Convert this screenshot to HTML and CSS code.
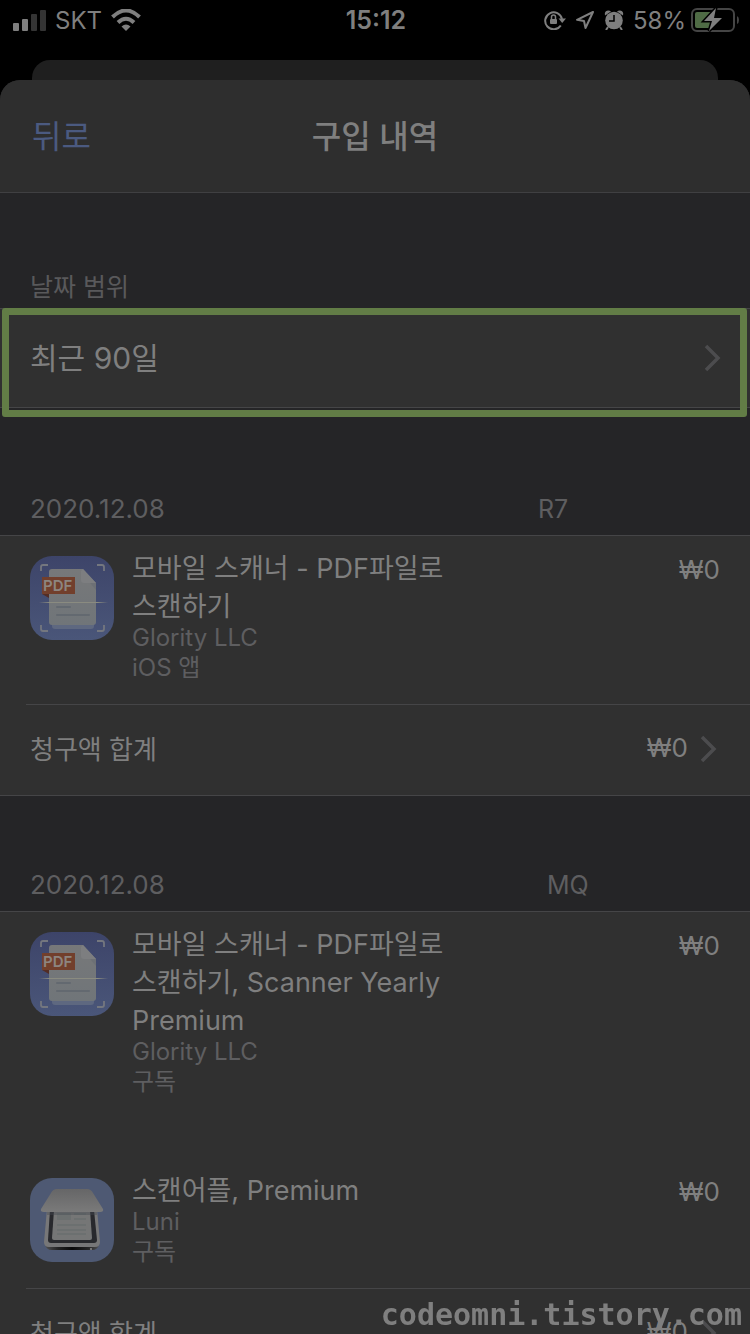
FILE: index.html
```html
<!DOCTYPE html>
<html lang="ko">
  <head>
    <meta charset="utf-8">
    <meta name="viewport" content="width=device-width, initial-scale=1">
    <title>구입 내역</title>
    <link rel="stylesheet" href="styles.css">
  </head>
  <body>
    <!-- shared icons -->
    <svg class="defs" width="0" height="0" aria-hidden="true">
      <defs>
        <linearGradient id="pdf-bg" x1="0" y1="0" x2="0" y2="1">
          <stop offset="0" stop-color="#3d4469"/>
          <stop offset="1" stop-color="#4a5679"/>
        </linearGradient>
        <linearGradient id="paper" x1="0" y1="0" x2="0" y2="1">
          <stop offset="0" stop-color="#777879"/>
          <stop offset="1" stop-color="#707579"/>
        </linearGradient>
        <linearGradient id="beam" x1="0" y1="0" x2="1" y2="0">
          <stop offset="0" stop-color="#8a8b80" stop-opacity="0"/>
          <stop offset=".15" stop-color="#8a8b80"/>
          <stop offset=".85" stop-color="#8a8b80"/>
          <stop offset="1" stop-color="#8a8b80" stop-opacity="0"/>
        </linearGradient>
        <linearGradient id="lid" x1="0" y1="0" x2="0" y2="1">
          <stop offset="0" stop-color="#666667"/>
          <stop offset="1" stop-color="#7a7a7a"/>
        </linearGradient>
        <linearGradient id="base" x1="0" y1="0" x2="1" y2="0">
          <stop offset="0" stop-color="#505051"/>
          <stop offset=".25" stop-color="#222223"/>
          <stop offset=".5" stop-color="#09090a"/>
          <stop offset=".8" stop-color="#252526"/>
          <stop offset="1" stop-color="#505051"/>
        </linearGradient>
      </defs>
      <symbol id="chevron" viewBox="0 0 18 28">
        <path d="M2 2l12 12L2 26" fill="none" stroke="currentColor" stroke-width="3.500"/>
      </symbol>
      <symbol id="app-pdf" viewBox="0 0 84 84">
        <rect width="84" height="84" rx="22" fill="url(#pdf-bg)"/>
        <path d="M11 15v-4q0-2 2-2h5M67 9h5q2 0 2 2v4M11 69v4q0 2 2 2h5M67 75h5q2 0 2-2v-4" fill="none" stroke="#74777f" stroke-width="1.800"/>
        <path d="M22 68h42v2q0 3-3 3H25q-3 0-3-3z" fill="#5e6880"/>
        <path d="M22 13h31l13 14v39q0 3-3 3H22q-3 0-3-3V16q0-3 3-3z" fill="url(#paper)"/>
        <path d="M51 16l15 11v7z" fill="#686c73" opacity=".6"/>
        <path d="M53 13l13 14H54q-3 0-3-3V15z" fill="#7d7e80"/>
        <path d="M27 51h13M27 59h32" stroke="#636970" stroke-width="2" stroke-linecap="round"/>
        <path d="M12 38h7v4z" fill="#532d25"/>
        <path d="M12 21h33v17H12z" fill="#723f2c"/>
        <text class="pdf-text" x="13" y="35">PDF</text>
        <rect x="9" y="46" width="69" height="1" fill="url(#beam)"/>
      </symbol>
      <symbol id="app-scanner" viewBox="0 0 84 84">
        <rect width="84" height="84" rx="22" fill="#4e5973"/>
        <path d="M15 66h54q-1 6-7 6H22q-6 0-7-6z" fill="url(#base)"/>
        <path d="M17 31h50l3 33q0 5-5 5H19q-5 0-5-5z" fill="#777778"/>
        <path d="M20 32h44l3 30q0 3-3 3H21q-3 0-3-3z" fill="#28292d"/>
        <path d="M24 32h36l2 28q0 2-2 2H24q-2 0-2-2z" fill="#757676"/>
        <path d="M27 35h14v7H27zM44 35h12v2H44zM44 40h12v2H44zM27 46h29v2H27zM27 51h29v2H27zM27 55h29v2H27z" fill="#6c7070"/>
        <path d="M17 34h50v3H17z" fill="#444850" opacity=".4"/>
        <path d="M27 11h30q4 0 6 4l10 16q1 3-3 3H14q-4 0-3-3l10-16q2-4 6-4z" fill="url(#lid)"/>
        <circle cx="61" cy="71" r="1" fill="#8a8a8a"/>
      </symbol>
    </svg>

    <div class="status-bar">
      <div class="status-left">
        <svg width="33" height="21" viewBox="0 0 33 21" aria-hidden="true">
          <rect y="13" width="6" height="8" rx="1" fill="#7f7f7f"/>
          <rect x="9" y="9" width="6" height="12" rx="1" fill="#7f7f7f"/>
          <rect x="18" y="4" width="6" height="17" rx="1" fill="#343434"/>
          <rect x="27" width="6" height="21" rx="1" fill="#343434"/>
        </svg>
        <span>SKT</span>
        <svg width="30" height="22" viewBox="0 0 30 22" aria-hidden="true">
          <path d="M1.500 8Q15-5 28.500 8M7 13.500Q15 6 23 13.500" fill="none" stroke="#7f7f7f" stroke-width="4"/>
          <path d="M15 22l-4.500-4.500q4.500-4 9 0z" fill="#7f7f7f"/>
        </svg>
      </div>
      <time class="clock">15:12</time>
      <div class="status-right">
        <svg width="22" height="20" viewBox="0 0 22 20" aria-hidden="true">
          <path d="M16.800 15.500A8.500 8.500 0 1 1 18 9" fill="none" stroke="#7f7f7f" stroke-width="2"/>
          <path d="M14.500 8.500H22L18.200 13z" fill="#7f7f7f"/>
          <rect x="6" y="9" width="7" height="5" rx="1" fill="#7f7f7f"/>
          <path d="M7.500 9V7q0-2 2-2t2 2v2" fill="none" stroke="#7f7f7f" stroke-width="1.500"/>
        </svg>
        <svg width="20" height="20" viewBox="0 0 20 20" aria-hidden="true">
          <path d="M18 2L2 9.800l7 1.200 1.500 7z" fill="none" stroke="#7f7f7f" stroke-width="2" stroke-linejoin="round"/>
        </svg>
        <svg width="20" height="20" viewBox="0 0 20 20" aria-hidden="true">
          <circle cx="10" cy="10.500" r="8.800" fill="#7f7f7f"/>
          <path d="M1 5.500Q0 1 4 .5q2 0 3 1zM19 5.500q1-4.500-3-5-2 0-3 1z" fill="#7f7f7f"/>
          <path d="M4 17l-2 3M16 17l2 3" stroke="#7f7f7f" stroke-width="2"/>
          <path d="M10 5v6H5" fill="none" stroke="#000" stroke-width="1.500"/>
        </svg>
        <span>58%</span>
        <svg width="48" height="24" viewBox="0 0 48 24" aria-hidden="true">
          <rect x="1" y="1" width="42" height="22" rx="5" fill="none" stroke="#454545" stroke-width="2"/>
          <path d="M46 8q2 1 2 4t-2 4z" fill="#454545"/>
          <path d="M6 4h16v16H6q-2 0-2-2V6q0-2 2-2z" fill="#4f6b45"/>
          <path class="bolt" d="M25 0L13 13h8l-3 10 13-13h-8z"/>
        </svg>
      </div>
    </div>

    <div class="back-sheet"></div>

    <div class="sheet">
      <header class="nav">
        <a class="back" href="#back">뒤로</a>
        <h1>구입 내역</h1>
      </header>

      <main>
        <h2 class="range-label" id="range">날짜 범위</h2>
        <button class="range" type="button" aria-labelledby="range range-value">
          <span id="range-value">최근 90일</span>
          <svg class="chevron" aria-hidden="true"><use href="#chevron"/></svg>
        </button>

        <section class="order">
          <div class="order-head order-first">
            <time>2020.12.08</time>
            <span class="order-id">R7</span>
          </div>
          <div class="card">
            <article class="item">
              <svg class="app-icon" aria-hidden="true"><use href="#app-pdf"/></svg>
              <div class="info">
                <h3>모바일 스캐너 - PDF파일로 스캔하기</h3>
                <p>Glority LLC</p>
                <p>iOS 앱</p>
              </div>
              <span class="price">₩0</span>
            </article>
            <a class="total" href="#order-1">
              <span>청구액 합계</span>
              <span class="amount">₩0</span>
              <svg class="chevron" aria-hidden="true"><use href="#chevron"/></svg>
            </a>
          </div>
        </section>

        <section class="order">
          <div class="order-head">
            <time>2020.12.08</time>
            <span class="order-id order-id-short">MQ</span>
          </div>
          <div class="card">
            <article class="item">
              <svg class="app-icon" aria-hidden="true"><use href="#app-pdf"/></svg>
              <div class="info">
                <h3>모바일 스캐너 - PDF파일로 스캔하기, Scanner Yearly Premium</h3>
                <p>Glority LLC</p>
                <p>구독</p>
              </div>
              <span class="price">₩0</span>
            </article>
            <article class="item">
              <svg class="app-icon" aria-hidden="true"><use href="#app-scanner"/></svg>
              <div class="info">
                <h3>스캔어플, Premium</h3>
                <p>Luni</p>
                <p>구독</p>
              </div>
              <span class="price">₩0</span>
            </article>
            <a class="total" href="#order-2">
              <span>청구액 합계</span>
              <span class="amount">₩0</span>
              <svg class="chevron" aria-hidden="true"><use href="#chevron"/></svg>
            </a>
          </div>
        </section>
      </main>
    </div>

    <div class="watermark">codeomni.tistory.com</div>
  </body>
</html>
```
FILE: styles.css
```css
*{
  box-sizing: border-box;
}
body{
  display: flex;
  flex-direction: column;
  height: 100vh;
  margin: 0;
  overflow: hidden;
  background: #000;
  color: #7f7f7f;
  font-family: Inter, "Noto Sans CJK KR", sans-serif;
  font-size: 26px;
  word-break: keep-all;
}
h1, h2, h3, p{
  margin: 0;
  font-weight: 400;
}
a{
  color: inherit;
  text-decoration: none;
}
svg{
  display: block;
  flex: none;
}
.defs{
  position: absolute;
}
.pdf-text{
  fill: #8d8580;
  font-size: 15px;
  font-weight: 600;
}
.bolt{
  fill: #7f7f7f;
  stroke: #000;
  stroke-width: 3px;
  paint-order: stroke;
}

/* status bar */
.status-bar{
  display: grid;
  grid-template-columns: 1fr auto 1fr;
  align-items: center;
  flex: none;
  height: 60px;
  padding: 0 11px 20px 13px;
  font-size: 24px;
}
.status-left, .status-right{
  display: flex;
  align-items: center;
  gap: 9px;
}
.status-right{
  justify-content: flex-end;
}
.status-right span{
  margin-right: -4px;
}
.clock{
  font-size: 25px;
  font-weight: 600;
}

/* sheets */
.back-sheet{
  flex: none;
  height: 20px;
  margin: 0 32px;
  border-radius: 18px 18px 0 0;
  background: #1f1f1f;
}
.sheet{
  display: flex;
  flex-direction: column;
  flex: 1;
  min-height: 0;
  border-radius: 20px 20px 0 0;
  overflow: hidden;
  background: #252527;
}
.nav{
  display: grid;
  grid-template-columns: 1fr auto 1fr;
  align-items: center;
  flex: none;
  height: 113px;
  padding: 0 32px 4px;
  border-bottom: 1px solid #404042;
  background: #2e2e2e;
  font-size: 32px;
}
.nav h1{
  font-size: 32px;
  font-weight: 500;
}
.back{
  color: #4b5a80;
}
main{
  flex: 1;
  min-height: 0;
  overflow: hidden;
}

/* date range */
.range-label{
  height: 115px;
  padding: 79px 30px 0;
  color: #59595b;
  font-size: 25px;
  line-height: 30px;
}
.range{
  position: relative;
  display: flex;
  align-items: center;
  justify-content: space-between;
  width: 100%;
  height: 100px;
  padding: 0 28px 0 30px;
  border: 0;
  border-top: 1px solid #454547;
  border-bottom: 1px solid #454547;
  background: #303030;
  color: inherit;
  font: inherit;
  font-size: 30px;
}
.range span{
  padding-bottom: 4px;
}
.range::after{
  content: "";
  position: absolute;
  top: -1px;
  right: 3px;
  bottom: -10px;
  left: 2px;
  border: 7px solid #627d46;
  border-radius: 3px;
}
.chevron{
  width: 18px;
  height: 28px;
  color: #4c4c4e;
}

/* orders */
.order-head{
  display: flex;
  justify-content: space-between;
  align-items: flex-end;
  height: 115px;
  padding: 0 30px 11px;
  color: #5e5e60;
  font-size: 26px;
  line-height: 30px;
}
.order-first{
  height: 127px;
}
.order-id{
  width: 182px;
  font-size: 25px;
}
.order-id-short{
  width: 173px;
}
.card{
  border-top: 1px solid #454547;
  border-bottom: 1px solid #454547;
  background: #303030;
}
.item{
  display: flex;
  padding: 14px 30px 21px;
}
.item + .item{
  margin-top: 40px;
}
.app-icon{
  width: 84px;
  height: 84px;
  margin: 6px 18px 0 0;
}
.info{
  flex: 1;
}
.info h3{
  max-width: 320px;
  margin-bottom: -3px;
  font-size: 27px;
  line-height: 38px;
}
.info p{
  color: #5e5e60;
  font-size: 24px;
  line-height: 30px;
}
.price{
  line-height: 40px;
}
.total{
  display: flex;
  align-items: center;
  height: 91px;
  margin-left: 26px;
  padding: 0 32px 2px 4px;
  border-top: 1px solid #454547;
}
.total span{
  padding-bottom: 4px;
}
.amount{
  margin: 0 12px 0 auto;
}

.watermark{
  position: fixed;
  right: 8px;
  bottom: 0;
  font: bold 30px/38px "DejaVu Sans Mono", monospace;
}
```
